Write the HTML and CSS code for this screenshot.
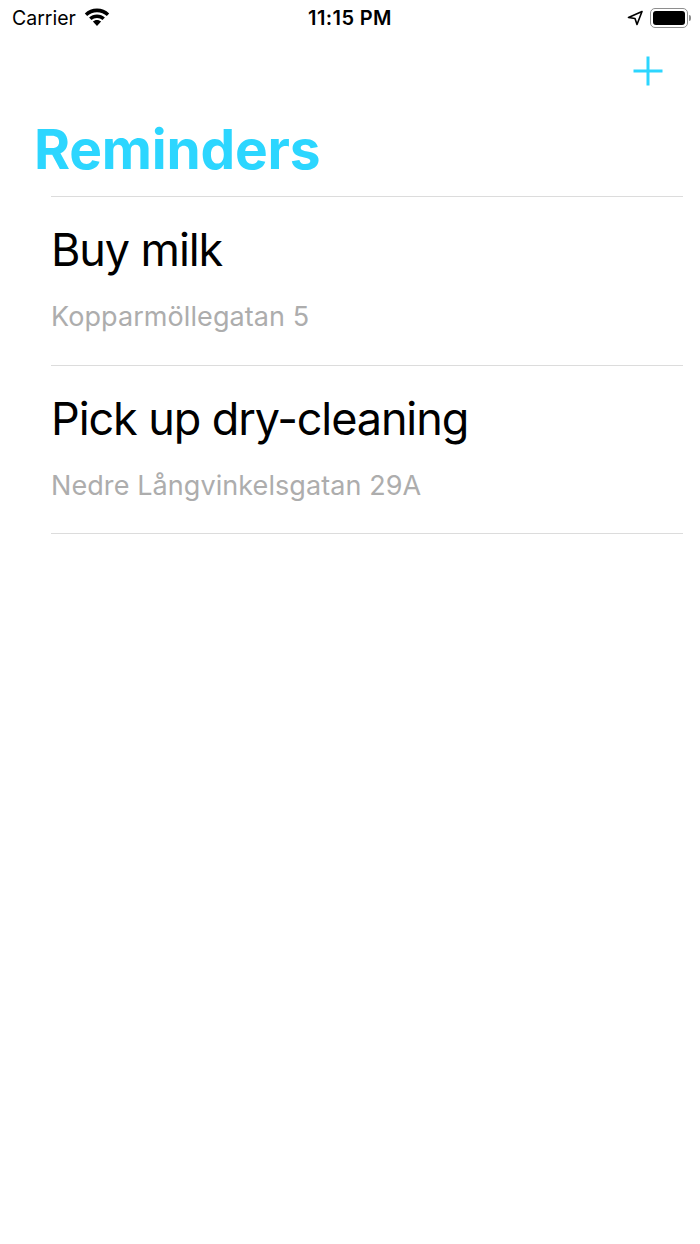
FILE: index.html
```html
<!DOCTYPE html>
<html lang="en">
<head>
  <meta charset="UTF-8" />
  <meta name="viewport" content="width=device-width, initial-scale=1.0"/>
  <title>Reminders</title>
  <link rel="stylesheet" href="styles.css">
</head>
<body>

  <div class="statusBar">
    <div class="statusLeft">
      <span class="carrier">Carrier</span>
      <svg class="wifi" width="26" height="18" viewBox="0 0 26 18">
        <path d="M13 0.500C8.300 0.500 4 2.300 0.800 5.400L3.200 8C5.700 5.600 9.200 4.200 13 4.200S20.300 5.600 22.800 8L25.200 5.400C22 2.300 17.700 0.500 13 0.500Z"/>
        <path d="M13 6.400C10 6.400 7.200 7.500 5.100 9.500L7.500 12.100C9 10.700 10.900 9.900 13 9.900S17 10.700 18.500 12.100L20.900 9.500C18.800 7.500 16 6.400 13 6.400Z"/>
        <path d="M13 12C11.400 12 10 12.600 8.900 13.600L13 18L17.100 13.600C16 12.600 14.600 12 13 12Z"/>
      </svg>
    </div>
    <span class="time">11:15 PM</span>
    <div class="statusRight">
      <svg class="arrow" width="16" height="16" viewBox="0 0 16 16">
        <path d="M15 1.500L1.500 7.500L8 8.500L10 14.500Z" fill="none" stroke="#000" stroke-width="1.600" stroke-linejoin="round"/>
      </svg>
      <div class="battery"><div class="batteryFill"></div></div>
      <div class="batteryCap"></div>
    </div>
  </div>

  <div class="navBar">
    <svg class="add" width="32" height="32" viewBox="0 0 32 32">
      <path d="M16 1.500V30.500M1.500 16H30.500" stroke="#2cd6ff" stroke-width="3"/>
    </svg>
  </div>

  <h1>Reminders</h1>

  <ul class="list">
    <li class="row">
      <div class="title">Buy milk</div>
      <div class="address">Kopparmöllegatan 5</div>
    </li>
    <li class="row">
      <div class="title">Pick up dry-cleaning</div>
      <div class="address">Nedre Långvinkelsgatan 29A</div>
    </li>
  </ul>

</body>
</html>
```

FILE: styles.css
```css
* {
  margin: 0;
  padding: 0;
  box-sizing: border-box;
  font-family: 'Inter', sans-serif;
}

body {
  background: #fff;
  color: #000;
  width: 700px;
  height: 1244px;
  overflow: hidden;
}

.statusBar {
  display: flex;
  align-items: center;
  justify-content: space-between;
  height: 36px;
  padding: 0 9px 0 12px;
}

.statusLeft,
.statusRight {
  display: flex;
  align-items: center;
  width: 200px;
}

.statusRight {
  justify-content: flex-end;
  width: 203px;
}

.carrier {
  font-size: 19.500px;
}

.wifi {
  margin-left: 8px;
  margin-top: -3px;
}

.time {
  font-size: 20px;
  font-weight: 600;
  letter-spacing: 0.400px;
}

.arrow {
  margin-right: 7px;
}

.battery {
  width: 38px;
  height: 20px;
  padding: 2px;
  border: 1.500px solid #8e8e8e;
  border-radius: 5px;
}

.batteryFill {
  height: 100%;
  background: #000;
  border-radius: 3px;
}

.batteryCap {
  width: 2px;
  height: 6px;
  margin-left: 1px;
  background: #8e8e8e;
  border-radius: 0 2px 2px 0;
}

.navBar {
  display: flex;
  justify-content: flex-end;
  height: 72px;
  padding: 19px 36px 0 0;
}

h1 {
  height: 88px;
  padding: 10px 0 0 34px;
  font-size: 55px;
  line-height: 62px;
  font-weight: 700;
  color: #2cd6ff;
  letter-spacing: -0.200px;
}

.list {
  list-style: none;
  margin: 0 17px 0 51px;
  border-top: 1px solid #dcdcdc;
}

.row {
  height: 168.500px;
  padding-top: 25px;
  border-bottom: 1px solid #dcdcdc;
}

.title {
  font-size: 45px;
  line-height: 56px;
  letter-spacing: -1.100px;
}

.address {
  margin-top: 23px;
  font-size: 27px;
  line-height: 32px;
  letter-spacing: 0.080px;
  color: #adadad;
}
```
